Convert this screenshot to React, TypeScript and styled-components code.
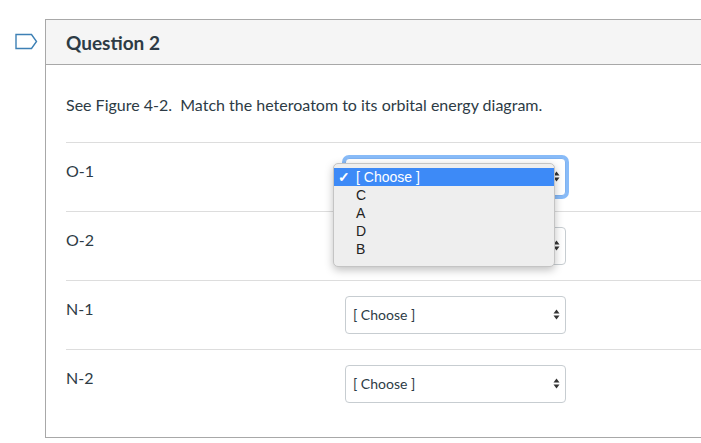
import React from 'react'
import styled, { createGlobalStyle } from 'styled-components'

type Answer = {
  label: string
  open?: boolean
}

const answers: Answer[] = [
  { label: 'O-1', open: true },
  { label: 'O-2' },
  { label: 'N-1' },
  { label: 'N-2' },
]

const options = ['C', 'A', 'D', 'B']

const Arrows = () => (
  <svg width="7" height="11" viewBox="0 0 7 11">
    <path d="M3.5 0.5 L6.5 4.5 L0.5 4.5 Z" fill="#333" />
    <path d="M3.5 10.5 L6.5 6.5 L0.5 6.5 Z" fill="#333" />
  </svg>
)

const Bookmark = () => (
  <svg width="24" height="17" viewBox="0 0 24 17">
    <path d="M1 1.5 H16.5 L21.5 8.5 L16.5 15.5 H1 Z" fill="none" stroke="#3d80b5" strokeWidth="1.4" />
  </svg>
)

function App() {
  return (
    <>
      <GlobalStyle />
      <Page>
        <Gutter>
          <Bookmark />
        </Gutter>
        <Card>
          <Header>Question 2</Header>
          <Body>
            <QuestionText>See Figure 4-2.&nbsp; Match the heteroatom to its orbital energy diagram.</QuestionText>
            {answers.map((a) => (
              <Row key={a.label}>
                <Label>{a.label}</Label>
                <SelectWrap>
                  <SelectBox focused={!!a.open}>
                    <SelectText>{a.open ? '' : '[ Choose ]'}</SelectText>
                    <Arrows />
                  </SelectBox>
                  {a.open ? (
                    <Menu>
                      <MenuItem selected>
                        <Check>✓</Check>[ Choose ]
                      </MenuItem>
                      {options.map((o) => (
                        <MenuItem key={o}>
                          <Check />
                          {o}
                        </MenuItem>
                      ))}
                    </Menu>
                  ) : null}
                </SelectWrap>
              </Row>
            ))}
          </Body>
        </Card>
      </Page>
    </>
  )
}

const GlobalStyle = createGlobalStyle`
  body {
    margin: 0;
    background: #ffffff;
    font-family: Lato, "Open Sans", sans-serif;
    overflow: hidden;
  }
`

const Page = styled.div`
  display: flex;
  padding-top: 19px;
  width: 701px;
  height: 443px;
  box-sizing: border-box;
`

const Gutter = styled.div`
  flex: 0 0 45px;
  display: flex;
  justify-content: flex-start;
  padding: 14px 0 0 15px;
  box-sizing: border-box;
`

const Card = styled.div`
  flex: 1;
  align-self: flex-start;
  border: 1px solid #a8a8a8;
  border-right: none;
`

const Header = styled.div`
  height: 44px;
  display: flex;
  align-items: center;
  padding-left: 20px;
  background: #f5f5f5;
  border-bottom: 1px solid #a8a8a8;
  font-size: 19px;
  font-weight: 700;
  color: #2d3b45;
`

const Body = styled.div`
  padding: 0 0 19px 20px;
`

const QuestionText = styled.div`
  padding: 30px 0 27px;
  font-size: 16px;
  line-height: 20px;
  color: #2d3b45;
`

const Row = styled.div`
  display: flex;
  height: 68px;
  border-top: 1px solid #dddddd;
`

const Label = styled.div`
  flex: 0 0 279px;
  padding-top: 18px;
  font-size: 16px;
  line-height: 19px;
  color: #2d3b45;
`

const SelectWrap = styled.div`
  position: relative;
  padding-top: 15px;
`

const SelectBox = styled.div<{ focused: boolean }>`
  width: 221px;
  height: 38px;
  box-sizing: border-box;
  display: flex;
  align-items: center;
  justify-content: space-between;
  padding: 0 5px 2px 7px;
  border: 1px solid ${(p) => (p.focused ? '#7fb2f0' : '#c7cdd1')};
  border-radius: 4px;
  background: #ffffff;
  ${(p) => (p.focused ? 'box-shadow: 0 0 0 3px rgba(72, 150, 245, 0.65);' : '')}
`

const SelectText = styled.span`
  font-size: 14px;
  color: #2d3b45;
`

const Menu = styled.div`
  position: absolute;
  top: 20px;
  left: -12px;
  width: 222px;
  padding: 4px 0 8px;
  box-sizing: border-box;
  background: #eeeeee;
  border: 1px solid #c4c4c4;
  border-radius: 5px;
  box-shadow: 0 3px 8px rgba(0, 0, 0, 0.25);
  z-index: 5;
`

const MenuItem = styled.div<{ selected?: boolean }>`
  display: flex;
  align-items: center;
  height: 18px;
  font-family: "Liberation Sans", Arial, sans-serif;
  font-size: 14px;
  color: ${(p) => (p.selected ? '#ffffff' : '#222222')};
  background: ${(p) => (p.selected ? '#3d8af7' : 'transparent')};
`

const Check = styled.span`
  flex: 0 0 22px;
  padding-left: 4px;
  box-sizing: border-box;
  font-size: 14px;
  font-weight: 700;
`

export default App
